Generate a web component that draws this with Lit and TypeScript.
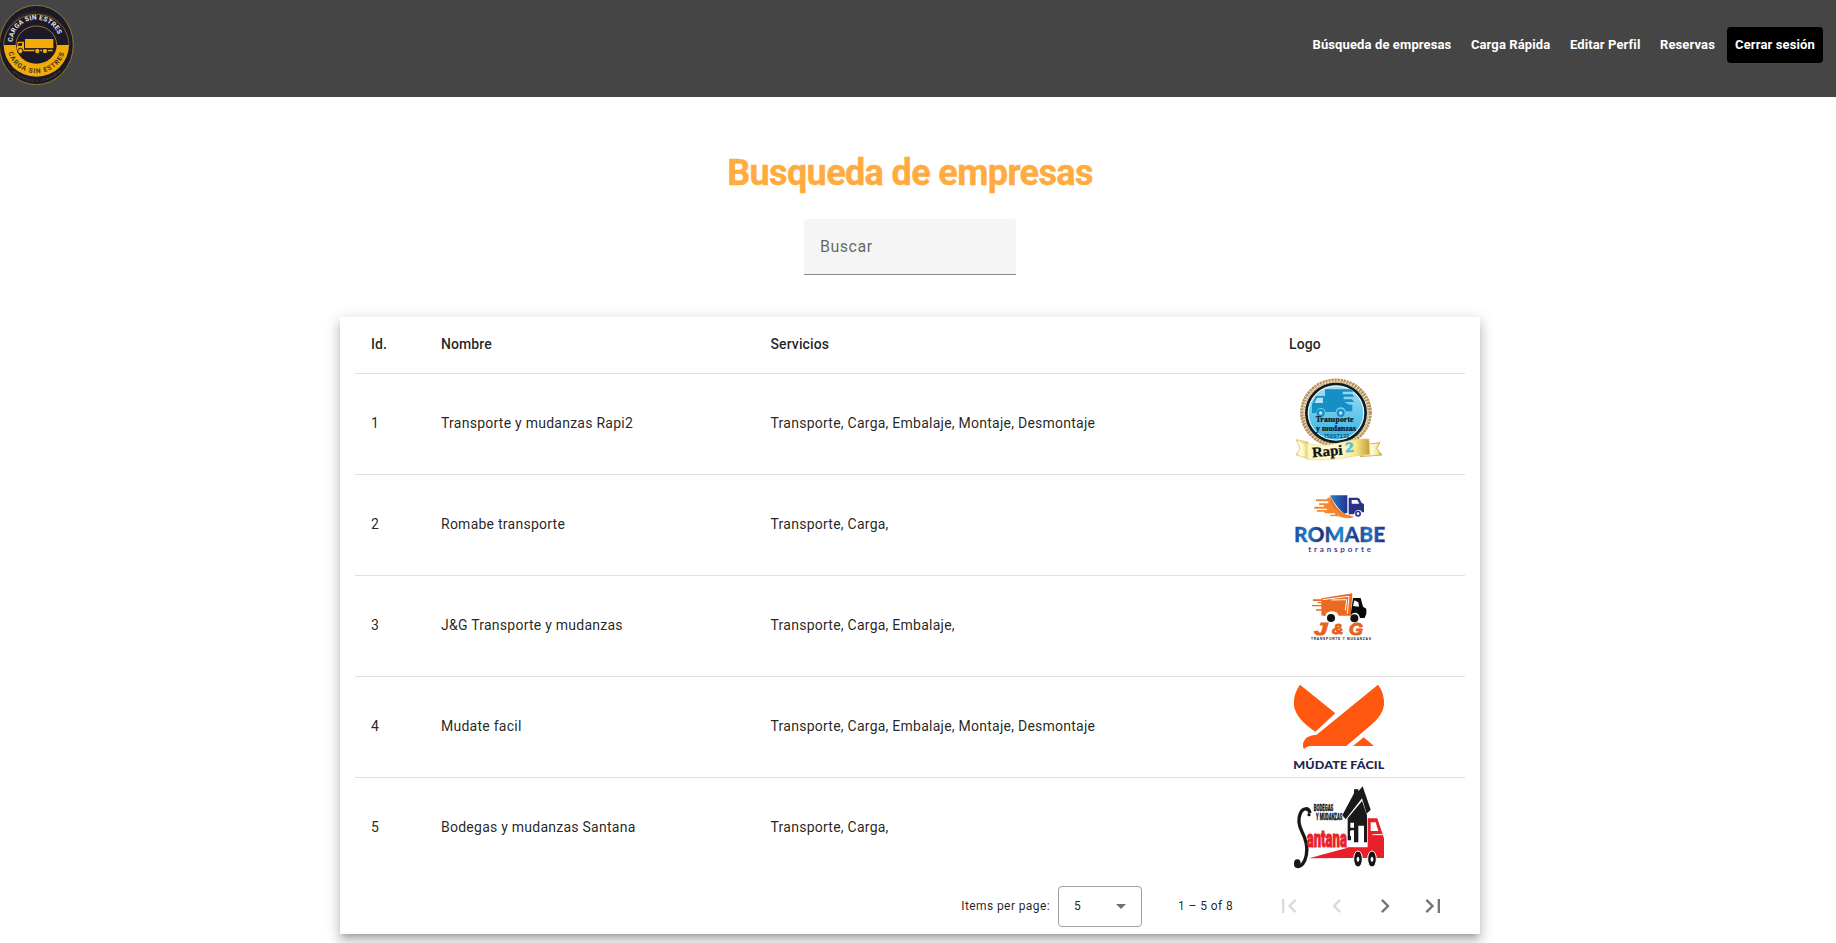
import { LitElement, html, css, svg } from "lit";
import { customElement } from "lit/decorators.js";

const brand = html`<svg class="brand" viewBox="0 0 300 291" aria-label="Carga sin estrés">
  <defs>
    <path id="top" d="M38 126 A69 66 0 0 1 178 126" />
    <path id="bottom" d="M23 150 A87 82 0 0 0 195 150" />
    <path id="rimTop" d="M16 110 A96 101 0 0 1 198 110" />
    <path id="rimBottom" d="M8 162 A104 110 0 0 0 210 162" />
  </defs>
  <ellipse cx="109" cy="135" rx="111" ry="119" fill="#1c1a27" stroke="#a9832d" stroke-width="2.5" />
  <path d="M11 135H207A98 95 0 0 1 11 135Z" fill="#f2ab08" />
  <ellipse cx="109" cy="135" rx="61" ry="56" fill="#1c1a27" />
  <path d="M48 135A61 57 0 0 1 170 135" fill="none" stroke="#d9a02a" stroke-width="2" />
  <path d="M11 135A98 92 0 0 1 207 135" fill="none" stroke="#a9832d" stroke-width="2" />
  <text font-size="20" fill="#e6e7ea" font-weight="700"><textPath href="#top" textLength="192">CARGA SIN ESTRES</textPath></text>
  <text font-size="20" fill="#3d331c" font-weight="700"><textPath href="#bottom" startOffset="8" textLength="222">CARGA SIN ESTRES</textPath></text>
  <text font-size="9" fill="#564426" font-weight="700"><textPath href="#rimTop" startOffset="42" textLength="165">TRANSPORTE Y COMPAÑIA</textPath></text>
  <text font-size="9" fill="#564426" font-weight="700"><textPath href="#rimBottom" startOffset="62" textLength="160">MUDANZAS Y COMPAÑIA</textPath></text>
  <g fill="#f2ab08">
    <path d="M75 117H160V145H75Z" />
    <path d="M53 125H72V149H158V154H50V142Z" />
    <path d="M56 129H66V137H53Z" fill="#1c1a27" />
    <g stroke="#1c1a27" stroke-width="3"><circle cx="61" cy="153" r="8" /><circle cx="112" cy="153" r="8" /><circle cx="135" cy="153" r="8" /></g>
  </g>
  <path d="M75 145.500H158" stroke="#1c1a27" stroke-width="2" />
</svg>`;

const rapi = html`<svg class="logo" viewBox="27 27 300 300">
  <defs>
    <linearGradient id="sky" x2="0" y2="1"><stop stop-color="#a9def5" /><stop offset=".5" stop-color="#69c9ed" /><stop offset="1" stop-color="#35aee0" /></linearGradient>
    <linearGradient id="gold"><stop stop-color="#b98b3a" /><stop offset=".15" stop-color="#fff6bd" /><stop offset=".5" stop-color="#fffde0" /><stop offset=".8" stop-color="#f8e887" /><stop offset="1" stop-color="#c69a3c" /></linearGradient>
  </defs>
  <ellipse cx="168" cy="143" rx="101" ry="96" fill="none" stroke="#b58d56" stroke-width="13" stroke-dasharray="7 2" />
  <ellipse cx="168" cy="143" rx="98" ry="94" fill="none" stroke="#e5cf9b" stroke-width="5" stroke-dasharray="5 4" />
  <ellipse cx="168" cy="144" rx="89" ry="87" fill="url(#sky)" stroke="#111c22" stroke-width="8" />
  <ellipse cx="168" cy="144" rx="83" ry="81" fill="none" stroke="#f3f6ef" stroke-width="3" />
  <g fill="#168fc7">
    <path d="M135 73H214L220 80H188V88H217L223 95H191V103H216L222 111H193L208 119H217V139H197Q194 126 181 127Q169 128 167 141H137Q132 127 121 129Q111 131 108 144H96V118L108 93H135Z" />
    <path d="M111 98H129V114H103Z" fill="#b4e1f4" />
    <circle cx="122" cy="144" r="12" /><circle cx="182" cy="144" r="12" />
  </g>
  <circle cx="122" cy="144" r="5" fill="#c8e9f6" /><circle cx="182" cy="144" r="5" fill="#c8e9f6" />
  <g font-family="Liberation Serif, serif" font-weight="700" fill="#09151d" stroke="#09151d" stroke-width=".7">
    <text x="107" y="172" font-size="24" textLength="114" lengthAdjust="spacingAndGlyphs">Transporte</text>
    <text x="108" y="197" font-size="23" textLength="120" lengthAdjust="spacingAndGlyphs">y mudanzas</text>
  </g>
  <text x="131" y="219" font-size="17" fill="#0a3246" textLength="77">75697133</text>
  <path d="M49 224L83 231V281L48 269L60 252Z" fill="url(#gold)" stroke="#d8ba64" stroke-width="2" />
  <path d="M250 239L300 233L290 251L306 270L242 275Z" fill="url(#gold)" stroke="#b8913d" stroke-width="2" />
  <path d="M55 225Q105 251 172 235T267 222L270 269Q230 270 190 279T80 283L79 240Z" fill="url(#gold)" stroke="#ead788" stroke-width="2" />
  <g font-family="Liberation Serif, serif" font-weight="700" transform="rotate(-5 150 260)">
    <text x="96" y="272" font-size="43" fill="#111" stroke="#111" textLength="92" lengthAdjust="spacingAndGlyphs">Rapi</text>
    <text x="196" y="266" font-size="42" fill="#58bdde" stroke="#58bdde" stroke-width="2" textLength="26" lengthAdjust="spacingAndGlyphs">2</text>
  </g>
</svg>`;

const romabe = html`<svg class="logo" viewBox="27 -15 300 300">
  <defs><linearGradient id="blue" gradientUnits="userSpaceOnUse" x1="45" y1="0" x2="316" y2="0"><stop stop-color="#1d4c9f" /><stop offset=".14" stop-color="#1e80c8" /><stop offset=".3" stop-color="#232d7e" /><stop offset=".5" stop-color="#2289cc" /><stop offset=".68" stop-color="#263386" /><stop offset=".82" stop-color="#2078bd" /><stop offset="1" stop-color="#29267a" /></linearGradient>
  <linearGradient id="box"><stop stop-color="#2582c8" /><stop offset="1" stop-color="#26318b" /></linearGradient></defs>
  <path d="M151 46H202V98L193 101Q168 83 151 46Z" fill="url(#box)" />
  <path d="M206 53H233Q240 54 243 67L252 73V97H246Q244 90 234 90Q225 91 222 103H206Z" fill="#29328b" />
  <path d="M215 60H232L238 71H215Z" fill="#fff" />
  <circle cx="234" cy="101" r="9" fill="#29328b" /><circle cx="234" cy="101" r="4" fill="#fff" />
  <path d="M146 43Q156 78 184 98Q203 108 223 110Q205 120 175 109H151V104H165V100H134V95H111V90H141V86H103V80H132V75H117V70H145V64H108V58H142V53H149Z" fill="#f48732" />
  <path d="M151 45Q163 84 194 103L222 110Q181 108 161 83Q148 66 151 45Z" fill="#ef7325" />
  <text x="42" y="186" font-family="Lato, sans-serif" font-weight="900" font-size="64" fill="url(#blue)" stroke="url(#blue)" stroke-width=".8" textLength="274" lengthAdjust="spacingAndGlyphs">ROMABE</text>
  <text x="85" y="217" font-family="Lato, sans-serif" font-weight="700" font-size="24" fill="#403d8c" textLength="188">transporte</text>
</svg>`;

const jg = html`<svg class="logo" viewBox="27 -12 300 300">
  <g fill="#e96a21">
    <path d="M124 55L217 40L213 107H176Q173 94 154 94Q137 96 136 109L124 106Z" />
    <path d="M99 58H126V63H99ZM113 66H126V70H113ZM96 75H126V79H96ZM108 88H126V92H108Z" />
  </g>
  <path d="M128 59L207 49L202 101M154 60L200 59L196 91" fill="none" stroke="#fff" stroke-width="3" />
  <path d="M219 54H242L249 80L259 86V101L254 114H240Q237 98 224 98Q216 99 212 106Z" fill="#080808" />
  <path d="M223 61L235 67L237 80L219 78Z" fill="#fff" />
  <circle cx="153" cy="114" r="12" fill="#111" /><circle cx="223" cy="115" r="12" fill="#111" />
  <g font-weight="900" font-style="italic" font-size="50" fill="#e66220" stroke="#e66220" stroke-width="3">
    <text x="103" y="164" textLength="40" lengthAdjust="spacingAndGlyphs">J</text>
    <text x="156" y="163" font-size="45" textLength="34" lengthAdjust="spacingAndGlyphs">&amp;</text>
    <text x="207" y="164" textLength="42" lengthAdjust="spacingAndGlyphs">G</text>
  </g>
  <text x="93" y="180" font-size="10" font-weight="900" fill="#222" textLength="180">TRANSPORTE Y MUDANZAS</text>
</svg>`;

const mudate = html`<svg class="logo" viewBox="27 6 300 300">
  <g fill="#ff570f">
    <path d="M60 29L166 115L106 170Q49 133 42 93Q39 56 60 29Z" />
    <path d="M294 29Q314 54 312 91Q308 122 274 149L199 213H94Q78 214 72 223Q64 207 76 192Q85 181 109 180Z" />
    <path d="M251 187L282 213H219Z" />
  </g>
  <text x="40" y="281" font-family="Lato, sans-serif" font-weight="900" font-size="31" fill="#24264a" textLength="273" lengthAdjust="spacingAndGlyphs">MÚDATE FÁCIL</text>
</svg>`;

const santana = html`<svg class="logo" viewBox="27 0 300 300">
  <path d="M87 241L203 209H221V240Z" fill="#e91f2a" />
  <path d="M202 208H263V121H292L306 163L312 181V240H202Z" fill="#e91f2a" />
  <path d="M272 133H287L295 159H272Z" fill="#fff" />
  <path d="M277 170H308" stroke="#fff" stroke-width="3" />
  <path d="M187 112L222 46V34H235V40L248 25L272 95L260 107L246 61L197 124Z" fill="#191919" />
  <path d="M203 121L246 69L261 112V193H252V143H235V193H222V157H213V187H203Z" fill="#191919" />
  <path d="M211 134H222V149H211ZM237 149H249V163H237ZM237 169H249V184H237ZM210 158H219V174H210Z" fill="#fff" />
  <g fill="#151515" stroke="#fff" stroke-width="3"><ellipse cx="234" cy="243" rx="13" ry="24" /><ellipse cx="276" cy="243" rx="13" ry="24" /></g>
  <ellipse cx="234" cy="244" rx="4" ry="8" fill="#fff" /><ellipse cx="276" cy="244" rx="4" ry="8" fill="#fff" />
  <path d="M90 105C87 88 68 88 61 106C53 125 57 144 66 161C78 184 84 205 79 231C75 254 63 268 52 265" fill="none" stroke="#171717" stroke-width="10" />
  <circle cx="87" cy="110" r="5" fill="#171717" /><ellipse cx="52" cy="257" rx="10" ry="13" fill="#171717" />
  <g font-family="Roboto, sans-serif" font-weight="900">
    <text x="101" y="98" font-size="27" fill="#191919" stroke="#191919" textLength="59" lengthAdjust="spacingAndGlyphs">BODEGAS</text>
    <text x="108" y="126" font-size="25" fill="#191919" stroke="#191919" textLength="79" lengthAdjust="spacingAndGlyphs">Y MUDANZAS</text>
    <text transform="translate(80 208) scale(1 1.550)" x="0" y="0" font-size="46" fill="#e91f2a" stroke="#e91f2a" stroke-width="2" textLength="121" lengthAdjust="spacingAndGlyphs">antana</text>
  </g>
</svg>`;

const companies = [
  { id: 1, name: "Transporte y mudanzas Rapi2", services: "Transporte, Carga, Embalaje, Montaje, Desmontaje", logo: rapi },
  { id: 2, name: "Romabe transporte", services: "Transporte, Carga,", logo: romabe },
  { id: 3, name: "J&G Transporte y mudanzas", services: "Transporte, Carga, Embalaje,", logo: jg },
  { id: 4, name: "Mudate facil", services: "Transporte, Carga, Embalaje, Montaje, Desmontaje", logo: mudate },
  { id: 5, name: "Bodegas y mudanzas Santana", services: "Transporte, Carga,", logo: santana },
];

const pagerIcons = [
  { label: "First page", off: true, d: "M18.410 16.590L13.820 12l4.590-4.590L17 6l-6 6 6 6zM6 6h2v12H6z" },
  { label: "Previous page", off: true, d: "M15.410 7.410L14 6l-6 6 6 6 1.410-1.410L10.830 12z" },
  { label: "Next page", off: false, d: "M10 6L8.590 7.410 13.170 12l-4.580 4.590L10 18l6-6z" },
  { label: "Last page", off: false, d: "M5.590 7.410L10.180 12l-4.590 4.590L7 18l6-6-6-6zM16 6h2v12h-2z" },
];

@customElement("app-root")
export class AppRoot extends LitElement {
  static styles = css`
    :host { display: block; height: 943px; overflow: hidden; background: #fff; font-family: Roboto, "Liberation Sans", sans-serif; color: rgba(0, 0, 0, 0.87); }
    * { box-sizing: border-box; }
    .bar { height: 97px; background: #454545; display: flex; justify-content: space-between; align-items: flex-start; }
    .brand { width: 100px; height: 97px; display: block; }
    .nav { display: flex; align-items: center; padding: 27px 13px 0 0; }
    .link { color: #fff; font-size: 13px; font-weight: 700; line-height: 36px; text-decoration: none; margin-right: 19.500px; white-space: nowrap; letter-spacing: 0.120px; }
    .link.last { margin-right: 12px; }
    .logout { width: 96px; height: 36px; padding: 0; border: 0; border-radius: 4px; background: #000; color: #fff; font: 700 13px/36px Roboto, sans-serif; letter-spacing: 0.120px; white-space: nowrap; }
    .main { width: 1820px; display: flex; flex-direction: column; align-items: center; }
    .title { margin: 55px 0 0; font-size: 36px; line-height: 42px; height: 67px; font-weight: 700; color: #ffab40; letter-spacing: -0.620px; white-space: nowrap; -webkit-text-stroke: 0.400px #ffab40; }
    .search { width: 212px; height: 56px; border-radius: 4px 4px 0 0; background: #f5f5f5; border-bottom: 1px solid #8c8c8c; padding: 0 16px; font-size: 16px; line-height: 56px; letter-spacing: 0.5px; color: rgba(0, 0, 0, 0.6); }
    .card { margin-top: 42px; width: 1140px; height: 617px; padding: 0 15px; background: #fff; box-shadow: 0 5px 5px -3px rgba(0,0,0,.2), 0 8px 10px 1px rgba(0,0,0,.14), 0 3px 14px 2px rgba(0,0,0,.12); }
    .row { display: grid; grid-template-columns: 70px 329.500px 518.500px 192px; height: 101px; align-items: center; border-bottom: 1px solid #e0e0e0; font-size: 14px; line-height: 20px; letter-spacing: 0.25px; }
    .row.head { height: 57px; font-weight: 500; letter-spacing: 0.1px; }
    .row.end { height: 100px; border-bottom: 0; }
    .cell { padding: 0 0 2px 16px; white-space: nowrap; }
    .cell.pic { padding-bottom: 0; }
    .logo { width: 100px; height: 100px; display: block; font-family: "Liberation Sans", sans-serif; }
    .pager { height: 56px; display: flex; align-items: center; justify-content: flex-end; font-size: 12px; letter-spacing: 0.4px; padding-right: 8px; }
    .select { width: 84px; height: 41px; margin: 0 36px 0 8px; border: 1px solid #9e9e9e; border-radius: 4px; display: flex; align-items: center; justify-content: space-between; padding: 0 15px; }
    .arrow { width: 10px; height: 5px; fill: #707070; }
    .range { width: 87px; }
    .btn { width: 48px; height: 48px; padding: 10px; border: 0; background: none; color: #757575; }
    .btn.off { color: #dadada; }
    .icon { width: 28px; height: 28px; display: block; fill: currentColor; }
  `;

  render() {
    return html`
      <header class="bar">
        ${brand}
        <nav class="nav">
          <a class="link">Búsqueda de empresas</a>
          <a class="link">Carga Rápida</a>
          <a class="link">Editar Perfil</a>
          <a class="link last">Reservas</a>
          <button class="logout">Cerrar sesión</button>
        </nav>
      </header>
      <main class="main">
        <h1 class="title">Busqueda de empresas</h1>
        <div class="search">Buscar</div>
        <section class="card">
          <div class="row head">
            <div class="cell">Id.</div><div class="cell">Nombre</div><div class="cell">Servicios</div><div class="cell">Logo</div>
          </div>
          ${companies.map((c, i) => html`
            <div class="row ${i === companies.length - 1 ? "end" : ""}">
              <div class="cell">${c.id}</div><div class="cell">${c.name}</div><div class="cell">${c.services}</div><div class="cell pic">${c.logo}</div>
            </div>`)}
          <footer class="pager">
            <span>Items per page:</span>
            <div class="select"><span>5</span><svg class="arrow" viewBox="0 0 10 5"><path d="M0 0H10L5 5Z" /></svg></div>
            <span class="range">1 – 5 of 8</span>
            ${pagerIcons.map((p) => html`<button class="btn ${p.off ? "off" : ""}" aria-label=${p.label}><svg class="icon" viewBox="0 0 24 24">${svg`<path d=${p.d} />`}</svg></button>`)}
          </footer>
        </section>
      </main>`;
  }
}
